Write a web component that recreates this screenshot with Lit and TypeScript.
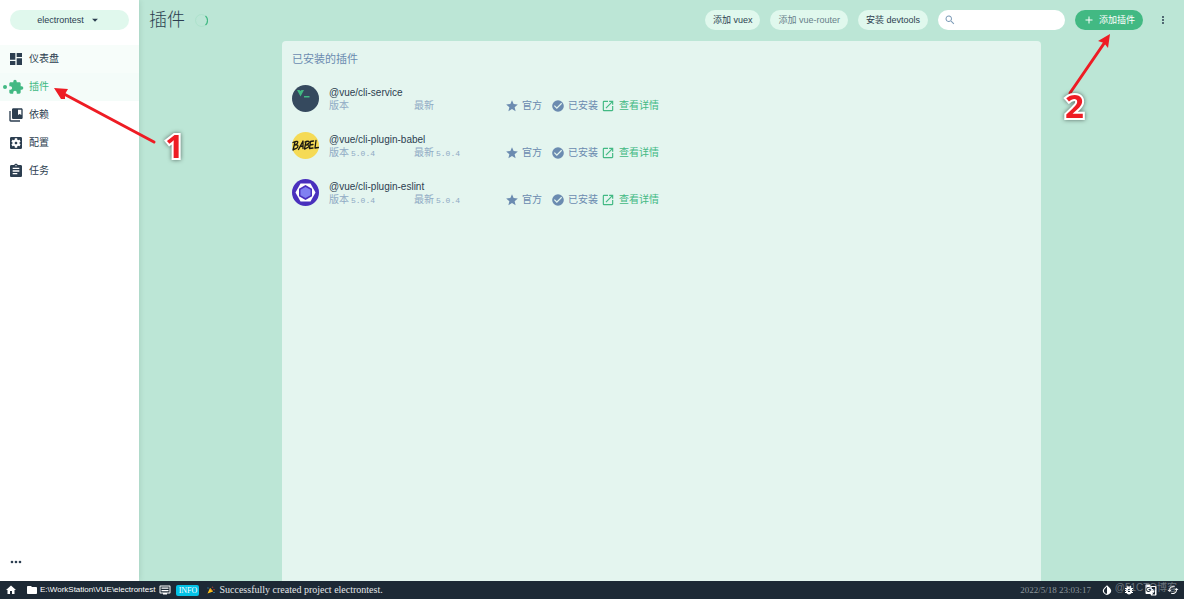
import { LitElement, html, css, svg } from "lit";
import { customElement } from "lit/decorators.js";

const paths: Record<string, string> = {
  dashboard: "M3 13h8V3H3v10zm0 8h8v-6H3v6zm10 0h8V11h-8v10zm0-18v6h8V3h-8z",
  extension: "M20.5 11H19V7c0-1.1-.9-2-2-2h-4V3.5a2.5 2.5 0 0 0-5 0V5H4c-1.1 0-2 .9-2 2v3.800h1.500a2.700 2.700 0 0 1 0 5.400H2V20c0 1.100.9 2 2 2h3.800v-1.500a2.700 2.700 0 0 1 5.400 0V22H17c1.100 0 2-.9 2-2v-4h1.500a2.500 2.500 0 0 0 0-5z",
  books: "M4 6H2v14c0 1.100.9 2 2 2h14v-2H4V6zm16-4H8c-1.100 0-2 .9-2 2v12c0 1.100.9 2 2 2h12c1.100 0 2-.9 2-2V4c0-1.100-.9-2-2-2zm0 10-2.500-1.500L15 12V4h5v8z",
  config: "M12 10c-1.100 0-2 .9-2 2s.9 2 2 2 2-.9 2-2-.9-2-2-2zm7-7H5a2 2 0 0 0-2 2v14c0 1.100.89 2 2 2h14a2 2 0 0 0 2-2V5a2 2 0 0 0-2-2zm-1.750 9c0 .23-.02.46-.05.68l1.480 1.160c.13.11.17.3.08.45l-1.400 2.420c-.09.15-.27.21-.43.15l-1.740-.7c-.36.28-.76.51-1.180.69l-.26 1.850c-.03.17-.18.3-.35.3h-2.800c-.17 0-.32-.13-.35-.29l-.26-1.850c-.43-.18-.82-.41-1.180-.69l-1.740.7c-.16.06-.34 0-.43-.15l-1.400-2.420c-.09-.15-.05-.34.08-.45l1.480-1.160c-.03-.23-.05-.46-.05-.69s.02-.46.05-.68l-1.480-1.160c-.13-.11-.17-.3-.08-.45l1.400-2.420c.09-.15.27-.21.43-.15l1.740.7c.36-.28.76-.51 1.180-.69l.26-1.850c.03-.17.18-.3.35-.3h2.800c.17 0 .32.13.35.29l.26 1.850c.43.18.82.41 1.180.69l1.740-.7c.16-.06.34 0 .43.15l1.400 2.420c.09.15.05.34-.08.45l-1.480 1.160c.03.23.05.46.05.69z",
  tasks: "M19 3h-4.180C14.400 1.840 13.300 1 12 1s-2.400.84-2.820 2H5c-1.100 0-2 .9-2 2v14c0 1.100.9 2 2 2h14c1.100 0 2-.9 2-2V5c0-1.100-.9-2-2-2zm-7 0a1 1 0 1 1 0 2 1 1 0 0 1 0-2zm2 14H7v-2h7v2zm3-4H7v-2h10v2zm0-4H7V7h10v2z",
  moreH: "M6 10a2 2 0 1 0 0 4 2 2 0 0 0 0-4zm12 0a2 2 0 1 0 0 4 2 2 0 0 0 0-4zm-6 0a2 2 0 1 0 0 4 2 2 0 0 0 0-4z",
  moreV: "M12 8a2 2 0 1 0 0-4 2 2 0 0 0 0 4zm0 2a2 2 0 1 0 0 4 2 2 0 0 0 0-4zm0 6a2 2 0 1 0 0 4 2 2 0 0 0 0-4z",
  drop: "M7 10l5 5 5-5z",
  search: "M15.500 14h-.79l-.28-.27A6.500 6.500 0 1 0 13.730 14.430l.27.28v.79l5 4.990L20.490 19l-4.990-5zm-6 0a4.500 4.500 0 1 1 0-9 4.500 4.500 0 0 1 0 9z",
  add: "M19 13h-6v6h-2v-6H5v-2h6V5h2v6h6v2z",
  star: "M12 17.270 18.180 21l-1.640-7.030L22 9.240l-7.190-.61L12 2 9.190 8.630 2 9.240l5.460 4.730L5.820 21z",
  check: "M12 2a10 10 0 1 0 0 20 10 10 0 0 0 0-20zm-2 15-5-5 1.410-1.410L10 14.170l7.590-7.590L19 8l-9 9z",
  open: "M19 19H5V5h7V3H5a2 2 0 0 0-2 2v14a2 2 0 0 0 2 2h14c1.100 0 2-.9 2-2v-7h-2v7zM14 3v2h3.590l-9.830 9.830 1.410 1.410L19 6.410V10h2V3h-7z",
  home: "M10 20v-6h4v6h5v-8h3L12 3 2 12h3v8z",
  folder: "M10 4H4c-1.100 0-2 .9-2 2v12c0 1.100.9 2 2 2h16c1.100 0 2-.9 2-2V8c0-1.100-.9-2-2-2h-8l-2-2z",
  log: "M21 3H3c-1.100 0-2 .9-2 2v12c0 1.100.9 2 2 2h5v2h8v-2h5c1.100 0 2-.9 2-2V5c0-1.100-.9-2-2-2zm0 14H3V5h18v12zM19 7H5v2.500h14V7zm0 5H5v2.500h14V12z",
  contrast: "M17.660 7.930 12 2.270 6.340 7.930a8 8 0 1 0 11.320 0zM12 19.590A6 6 0 0 1 7.760 9.350L12 5.100v14.490z",
  bug: "M20 8h-2.810a6 6 0 0 0-1.820-1.960L17 4.410 15.590 3l-2.170 2.170a6 6 0 0 0-2.830 0L8.410 3 7 4.410l1.620 1.630C7.880 6.550 7.260 7.220 6.810 8H4v2h2.090L6 11v1H4v2h2v1l.09 1H4v2h2.810a6 6 0 0 0 10.380 0H20v-2h-2.090l.09-1v-1h2v-2h-2v-1l-.09-1H20V8zm-6 8h-4v-2h4v2zm0-4h-4v-2h4v2z",
  translate: "M21 4H11l-1-3H3c-1.100 0-2 .9-2 2v15c0 1.100.9 2 2 2h8l1 3h9c1.100 0 2-.9 2-2V6c0-1.100-.9-2-2-2zM7 16a5 5 0 1 1 3.300-8.600L9 8.700a3 3 0 1 0 .8 3.300H7v-2h4.900A5 5 0 0 1 7 16zm14 5h-7l2-2-1-3 2 2 2-3-3-5h-2l-1-4h7v15z",
  refresh: "M19 8l-4 4h3a6 6 0 0 1-8.800 5.300l-1.460 1.460A8 8 0 0 0 20 12h3l-4-4zM6 12a6 6 0 0 1 8.800-5.300l1.460-1.460A8 8 0 0 0 4 12H1l4 4 4-4H6z",
};

const icon = (name: string) => html`<svg class="icon" viewBox="0 0 24 24" aria-hidden="true"><path d=${paths[name]}></path></svg>`;

const logos = {
  service: svg`<circle cx="27" cy="27" r="27" fill="#35495e"/><path d="M10 10h5l2 2 2-2h5l-7 13z" fill="#42b983"/><path d="M24 22h11v3H24z" fill="#42b983"/>`,
  babel: svg`<circle cx="27" cy="27" r="27" fill="#f5da55"/><g fill="none" stroke="#1c1a12" stroke-width="2.600" stroke-linecap="round" stroke-linejoin="round"><path d="M6 20 2 36M2 21c8-4 11-2 9 1-1 3-4 4-6 4 7-1 8 1 6 5-1 2-4 3-8 4"/><path d="M13 35l9-17 0 15M16 29l6-1"/><path d="M28 19l-3 15M26 20c7-3 10-1 8 2l-5 4c6-1 6 1 4 4l-7 4"/><path d="M43 18l-6 1-2 14 7-1M36 26l6-1"/><path d="M48 17l-2 15 7-1"/></g>`,
  eslint: svg`<circle cx="27" cy="27" r="27" fill="#4930bd"/><path d="M17 9h20l10 18-10 18H17L7 27z" fill="#fff"/><path d="M27 12l13 7.500v15L27 42l-13-7.500v-15z" fill="#4930bd"/><path d="M27 16l10 5.500v11L27 38l-10-5.500v-11z" fill="#8080f2"/>`,
};

@customElement("app-root")
export class AppRoot extends LitElement {
  static styles = css`
    :host {
      display: grid;
      grid-template-rows: minmax(0, 1fr) 18px;
      height: 100vh;
      position: relative;
      overflow: hidden;
      font: 10px/14px "Liberation Sans", "Noto Sans CJK SC", sans-serif;
      color: #2c3e50;
      background: #bce6d6;
    }
    * { box-sizing: border-box; }
    button, input { font: inherit; color: inherit; border: 0; margin: 0; padding: 0; background: none; }
    button { cursor: pointer; }
    a { color: inherit; text-decoration: none; }
    ul, h1, h2, h3, p { margin: 0; padding: 0; list-style: none; font-weight: inherit; }
    .icon { width: 16px; height: 16px; fill: currentColor; flex: none; display: block; }
    .body { display: flex; min-height: 0; }
    .side { width: 139px; flex: none; background: #fff; display: flex; flex-direction: column; box-shadow: 0 0 6px rgba(0, 60, 40, 0.15); padding-top: 10px; z-index: 1; }
    .pill { height: 20px; border-radius: 10px; background: #e0f8ed; font-size: 9px; display: flex; align-items: center; justify-content: center; white-space: nowrap; }
    .project { margin: 0 10px 15px; gap: 4px; }
    .project .icon { width: 14px; height: 14px; }
    .nav a { display: flex; align-items: center; gap: 5px; height: 28px; padding-left: 3px; }
    .nav a::before { content: ""; width: 4px; height: 4px; margin-right: -4px; border-radius: 50%; }
    .nav .tint { background: #f7fdfa; }
    .nav .current { color: #42b983; background: #f4fcf9; }
    .nav .current::before { background: #42b983; }
    .more { margin: auto auto 11px 8px; }
    .main { flex: 1; min-width: 0; display: flex; flex-direction: column; }
    .top { height: 41px; flex: none; display: flex; align-items: center; gap: 10px; padding: 0 15px 1px 10px; }
    .title { font-size: 18px; line-height: 24px; font-weight: 300; }
    .spin { width: 13px; height: 13px; margin-right: auto; }
    .top .pill { padding: 0 8px; }
    .top .dim { color: #67808a; }
    .top .search { width: 127px; background: #fff; padding: 0 6px; gap: 4px; justify-content: flex-start; }
    .search .icon { width: 12px; height: 12px; color: #7e9cb8; }
    .search input { flex: 1; min-width: 0; outline: none; }
    .top .primary { background: #42b983; color: #fff; gap: 4px; }
    .primary .icon, .dots .icon { width: 12px; height: 12px; }
    .dots { margin-left: 4px; }
    .panel { width: 73%; max-width: 759px; margin: 0 auto; flex: 1; background: #e4f5ef; border-radius: 4px 4px 0 0; padding: 10px; }
    .heading { color: #6b8bb0; font-size: 11px; line-height: 16px; margin-bottom: 8px; }
    .item { height: 47px; display: flex; align-items: center; gap: 10px; }
    .logo { width: 27px; height: 27px; flex: none; }
    .text { padding-top: 2px; }
    .name { font-size: 10px; line-height: 13px; }
    .meta { display: flex; align-items: center; line-height: 14px; color: #6b8bb0; }
    .version { width: 85px; color: #8faac4; display: flex; align-items: center; gap: 2px; }
    .version + .version { width: 91px; }
    .num { font: 8px/13px "Liberation Mono", monospace; }
    .tag { display: flex; align-items: center; gap: 3px; margin-right: 9px; }
    .tag .icon { width: 14px; height: 14px; }
    .installed { margin-right: 3px; }
    .link { color: #42b983; gap: 4px; margin-right: 0; }
    .status { background: #1d2935; color: #fff; display: flex; align-items: center; padding: 0 5px; font-size: 8px; line-height: 18px; z-index: 2; white-space: nowrap; }
    .status .icon { width: 12px; height: 12px; }
    .path { display: flex; align-items: center; gap: 2px; margin: 0 4px 0 9px; }
    .serif { font-family: "Liberation Serif", serif; font-size: 9px; }
    .message { font-size: 10px; color: #e2e6e9; }
    .info { background: #03c2e6; border-radius: 2px; line-height: 11px; width: 23px; text-align: center; margin: 0 8px 0 5px; font-size: 8px; }
    .party { width: 8px; height: 8px; margin-right: 4px; }
    .date { margin-left: auto; margin-right: 10px; color: #8c959c; }
    .tools { display: flex; gap: 10px; }
    .note { position: absolute; inset: 0; width: 100%; height: 100%; pointer-events: none; z-index: 3; }
    .note text { font: bold 33px "Noto Sans", sans-serif; fill: #ee1c24; stroke: #fff; stroke-width: 4px; paint-order: stroke; filter: drop-shadow(0 0 2px #0008); }
    .mark { position: absolute; right: 7px; bottom: 4px; font-size: 10px; line-height: 14px; color: #a0a8ae99; z-index: 4; pointer-events: none; }
  `;

  plugin(name: string, version: string, logo: unknown) {
    return html`<li class="item">
      <svg class="logo" viewBox="0 0 54 54" aria-hidden="true">${logo}</svg>
      <div class="text">
        <h3 class="name">@vue/${name}</h3>
        <div class="meta">
          <span class="version">版本 <span class="num">${version}</span></span>
          <span class="version">最新 <span class="num">${version}</span></span>
          <span class="tag">${icon("star")}官方</span>
          <span class="tag installed">${icon("check")}已安装</span>
          <a class="tag link" href="#">${icon("open")}查看详情</a>
        </div>
      </div>
    </li>`;
  }

  render() {
    return html`
      <div class="body">
        <aside class="side">
          <button class="pill project">electrontest ${icon("drop")}</button>
          <nav class="nav">
            <a class="tint" href="#">${icon("dashboard")}仪表盘</a>
            <a class="current" href="#" aria-current="page">${icon("extension")}插件</a>
            <a href="#">${icon("books")}依赖</a>
            <a href="#">${icon("config")}配置</a>
            <a href="#">${icon("tasks")}任务</a>
          </nav>
          <button class="more" aria-label="更多">${icon("moreH")}</button>
        </aside>
        <main class="main">
          <header class="top">
            <h1 class="title">插件</h1>
            <svg class="spin" viewBox="0 0 13 13" aria-hidden="true"><circle cx="6.500" cy="6.500" r="6" fill="none" stroke="#a4dfc6" stroke-width=".6"/><path d="M10.500 2a6 6 0 0 1 0 9" fill="none" stroke="#42b983" stroke-width="1.200"/></svg>
            <button class="pill">添加 vuex</button>
            <button class="pill dim">添加 vue-router</button>
            <button class="pill">安装 devtools</button>
            <label class="pill search">${icon("search")}<input type="text" aria-label="搜索" /></label>
            <button class="pill primary">${icon("add")}添加插件</button>
            <button class="dots" aria-label="菜单">${icon("moreV")}</button>
          </header>
          <section class="panel">
            <h2 class="heading">已安装的插件</h2>
            <ul>
              ${this.plugin("cli-service", "", logos.service)}
              ${this.plugin("cli-plugin-babel", "5.0.4", logos.babel)}
              ${this.plugin("cli-plugin-eslint", "5.0.4", logos.eslint)}
            </ul>
          </section>
        </main>
      </div>
      <footer class="status">
        <button aria-label="主页">${icon("home")}</button>
        <span class="path">${icon("folder")}E:\\WorkStation\\VUE\\electrontest</span>
        ${icon("log")}
        <span class="info serif">INFO</span>
        <svg class="party" viewBox="0 0 16 16" aria-hidden="true"><path d="M1 15 6 4l6 7z" fill="#fcc21b"/><path d="M6 5q3 1 5 6" stroke="#d08a20" stroke-width="2" fill="none"/><path d="M9 3l2-2 2 2zM12 7l3-1v3z" fill="#e8453c"/><path d="M1 3h2v2H1zM13 12h2v2h-2z" fill="#35a8e0"/></svg>
        <span class="serif message">Successfully created project electrontest.</span>
        <span class="date serif">2022/5/18 23:03:17</span>
        <span class="tools">${icon("contrast")}${icon("bug")}${icon("translate")}${icon("refresh")}</span>
      </footer>
      <svg class="note" aria-hidden="true">
        <g fill="#ee1c24" stroke="#ee1c24">
          <path d="M154 142 64 94" stroke-width="3" stroke-linecap="round"/>
          <path d="M54 88l14 1-3 5 0 5-4 0z" stroke="none"/>
          <path d="M1070 93l35-51" stroke-width="3" stroke-linecap="round"/>
          <path d="M1110 34l-12 7 6 2 4 5z" stroke="none"/>
        </g>
        <text x="165" y="158">1</text>
        <text x="1065" y="118">2</text>
      </svg>
      <span class="mark">@51CTO博客</span>
    `;
  }
}
